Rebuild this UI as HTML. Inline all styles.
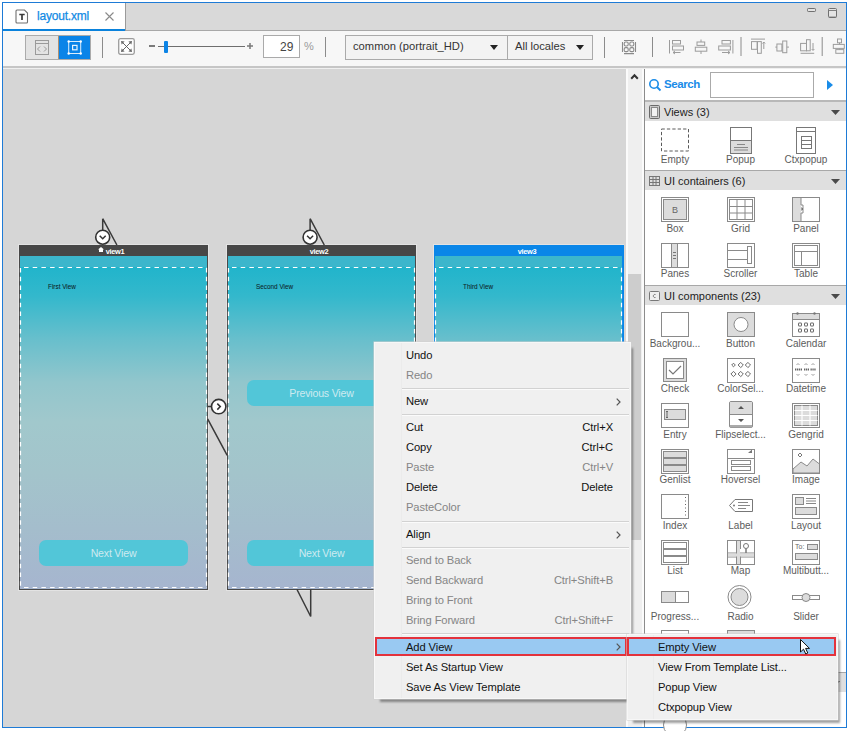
<!DOCTYPE html>
<html><head><meta charset="utf-8"><style>
*{margin:0;padding:0;box-sizing:border-box}
html,body{width:850px;height:731px;overflow:hidden;background:#fff}
body{position:relative;font-family:"Liberation Sans",sans-serif;color:#222}
.a{position:absolute}
.t{position:absolute;white-space:nowrap;line-height:1}
svg{position:absolute;overflow:visible}
.lab{font-size:10px;color:#5c5c5c}
.hdr{font-size:11px;color:#222}
.mi{font-size:11.2px;letter-spacing:-0.1px}
</style></head><body>

<!-- window frame -->
<div class="a" style="left:2px;top:2px;width:845px;height:726px;border:1px solid #1e7bd6;background:#d6d6d6"></div>

<!-- tab strip -->
<div class="a" style="left:3px;top:3px;width:843px;height:28px;background:#d9d9d9;border-bottom:1px solid #a8a8a8"></div>
<div class="a" style="left:3px;top:3px;width:123px;height:28px;background:#fff;border-right:1px solid #9a9a9a"></div>
<div class="a" style="left:3px;top:29px;width:122px;height:2px;background:#0a82dc"></div>
<!-- file icon -->
<svg style="left:15px;top:9px" width="14" height="15" viewBox="0 0 14 15">
  <path d="M2 1 H9.5 L12.5 4 V13 Q12.5 14 11.5 14 H2 Q1 14 1 13 V2 Q1 1 2 1 Z" fill="#fff" stroke="#707070" stroke-width="1.1"/>
  <path d="M4.3 5.5 H9.7 M7 5.5 V11" stroke="#3a3a3a" stroke-width="1.7"/>
</svg>
<div class="t" style="left:37px;top:10px;font-size:12px;color:#118ae4;letter-spacing:-0.2px;-webkit-text-stroke:0.25px #118ae4">layout.xml</div>
<svg style="left:105px;top:12px" width="9" height="9" viewBox="0 0 9 9"><path d="M0.5 0.5 L8.5 8.5 M8.5 0.5 L0.5 8.5" stroke="#8a8a8a" stroke-width="1.1"/></svg>
<!-- min / max -->
<svg style="left:807px;top:8px" width="9" height="4" viewBox="0 0 9 4"><rect x="0.5" y="0.5" width="8" height="3" rx="0.8" fill="#e4e4e4" stroke="#707070"/></svg>
<svg style="left:828px;top:8px" width="9" height="10" viewBox="0 0 9 10"><rect x="0.5" y="0.5" width="8" height="9" rx="1" fill="#e4e4e4" stroke="#707070"/><path d="M0.5 2.5 H8.5" stroke="#808080"/><path d="M1 9 H8" stroke="#707070" stroke-width="0.8"/></svg>

<!-- toolbar -->
<div class="a" style="left:3px;top:31px;width:843px;height:35px;background:#f7f7f7"></div>
<div class="a" style="left:3px;top:66px;width:843px;height:2px;background:#c6c6c6"></div>
<div class="a" style="left:3px;top:68px;width:843px;height:1px;background:#f0f0f0"></div>

<!-- segmented buttons -->
<div class="a" style="left:25px;top:35px;width:66px;height:25px;border:1px solid #ababab;background:#e3e3e3"></div>
<div class="a" style="left:58px;top:36px;width:32px;height:23px;background:#0a84e8;border-left:1px solid #b09070"></div>
<svg style="left:35px;top:40px" width="14" height="15" viewBox="0 0 14 15">
  <rect x="0.5" y="0.5" width="13" height="14" fill="none" stroke="#9a9a9a"/>
  <path d="M0.5 3.5 H13.5" stroke="#9a9a9a"/>
  <path d="M5 6.5 L2.5 9 L5 11.5 M9 6.5 L11.5 9 L9 11.5" fill="none" stroke="#9a9a9a"/>
</svg>
<svg style="left:66px;top:39px" width="17" height="17" viewBox="66 39 17 17">
  <rect x="68.7" y="41.5" width="12" height="12" fill="none" stroke="#fff" stroke-opacity="0.85" stroke-width="1"/>
  <rect x="72.6" y="45.4" width="4.4" height="4.4" fill="none" stroke="#fff" stroke-opacity="0.9" stroke-width="1.2"/>
  <g fill="#fff"><circle cx="68.7" cy="41.5" r="1.2"/><circle cx="80.7" cy="41.5" r="1.2"/><circle cx="68.7" cy="53.5" r="1.2"/><circle cx="80.7" cy="53.5" r="1.2"/></g>
</svg>
<div class="a" style="left:102px;top:37px;width:1px;height:21px;background:#8c8c8c"></div>
<!-- fit icon -->
<svg style="left:118px;top:38px" width="17" height="17" viewBox="0 0 17 17">
  <rect x="0.7" y="0.7" width="15.6" height="15.6" rx="1.8" fill="#fdfdfd" stroke="#9c9c9c" stroke-width="1.3"/>
  <path d="M4.5 4.5 L12.5 12.5 M12.5 4.5 L4.5 12.5" stroke="#555" stroke-width="0.9"/>
  <path d="M3 3 L6.6 3.6 L3.6 6.6 Z M14 3 L10.4 3.6 L13.4 6.6 Z M3 14 L6.6 13.4 L3.6 10.4 Z M14 14 L10.4 13.4 L13.4 10.4 Z" fill="#666"/>
</svg>
<!-- slider -->
<div class="a" style="left:148.5px;top:45px;width:6px;height:1.5px;background:#7a7a7a"></div>
<div class="a" style="left:158px;top:46px;width:87px;height:1.2px;background:#6e6e6e"></div>
<div class="a" style="left:164px;top:41px;width:4px;height:12px;background:#0c84e6;border-radius:1px"></div>
<svg style="left:247px;top:43px" width="6" height="6" viewBox="0 0 6 6"><path d="M0 3 H6 M3 0 V6" stroke="#7a7a7a" stroke-width="1.5"/></svg>
<div class="a" style="left:263px;top:35px;width:37px;height:23px;border:1px solid #aaa;background:#fff"></div>
<div class="t" style="left:280px;top:41px;font-size:12px;color:#444">29</div>
<div class="t" style="left:304px;top:41px;font-size:11px;color:#9a9a9a">%</div>
<div class="a" style="left:325px;top:37px;width:1px;height:20px;background:#8c8c8c"></div>
<!-- combos -->
<div class="a" style="left:345px;top:35px;width:248px;height:25px;border:1px solid #aaa;background:#f3f3f3"></div>
<div class="a" style="left:507px;top:36px;width:1px;height:23px;background:#aaa"></div>
<div class="t" style="left:353px;top:41px;font-size:11.2px;color:#333">common (portrait_HD)</div>
<svg style="left:490px;top:45px" width="8" height="5" viewBox="0 0 8 5"><path d="M0 0 H8 L4 5 Z" fill="#222"/></svg>
<div class="t" style="left:515px;top:41px;font-size:11.2px;color:#333">All locales</div>
<svg style="left:576px;top:45px" width="8" height="5" viewBox="0 0 8 5"><path d="M0 0 H8 L4 5 Z" fill="#222"/></svg>
<div class="a" style="left:604px;top:37px;width:1px;height:21px;background:#8c8c8c"></div>
<!-- grid icon -->
<svg style="left:616px;top:35px" width="26" height="23" viewBox="616 35 26 23">
  <path d="M624 40.5 H634 M624 53.6 H634 M622.5 42 V52 M635.5 42 V52" stroke="#8a8a8a" stroke-width="1.1"/>
  <g fill="none" stroke="#8a8a8a" stroke-width="1.1">
  <rect x="624.2" y="42" width="4" height="4" rx="1.4"/><rect x="629.8" y="42" width="4" height="4" rx="1.4"/>
  <rect x="624.2" y="47.6" width="4" height="4" rx="1.4"/><rect x="629.8" y="47.6" width="4" height="4" rx="1.4"/>
  </g>
</svg>
<div class="a" style="left:652px;top:37px;width:1px;height:20px;background:#8c8c8c"></div>
<svg style="left:664px;top:36px" width="190" height="22" viewBox="664 36 190 22">
 <g fill="none" stroke="#9c9c9c" stroke-width="1">
  <!-- align left -->
  <path d="M669.5 40 V53.5"/>
  <rect x="672.5" y="40.5" width="8" height="3.5"/>
  <rect x="672.5" y="46" width="11" height="4"/>
  <path d="M673 52.5 H680.5 M673 52.5 l2 -1.5 M673 52.5 l2 1.5"/>
  <!-- align center -->
  <path d="M701 39.5 V42 M701 51.2 V54"/>
  <rect x="697" y="42" width="7.7" height="3.4"/>
  <rect x="695.3" y="47.2" width="11.5" height="4"/>
  <!-- align right -->
  <path d="M732.9 40 V53.5"/>
  <rect x="722" y="40.5" width="8.4" height="3.5"/>
  <rect x="718.7" y="46" width="11.7" height="4"/>
  <path d="M722 52.5 H730 M730 52.5 l-2 -1.5 M730 52.5 l-2 1.5"/>
  <!-- align top -->
  <path d="M751 39.1 H765"/>
  <rect x="751.5" y="41.6" width="5.6" height="7.7"/>
  <rect x="757.5" y="41.6" width="3.8" height="11.7"/>
  <path d="M763.8 42 V49 M763.8 42 l-1.3 1.5 M763.8 42 l1.3 1.5"/>
  <!-- align middle -->
  <path d="M775.3 47.1 H789"/>
  <rect x="776.9" y="44" width="5" height="7" fill="#f5f5f5"/>
  <rect x="782.7" y="41" width="4.1" height="11.7" fill="#f5f5f5"/>
  <!-- align bottom -->
  <path d="M800.6 53.3 H814.2"/>
  <rect x="800.6" y="43.4" width="5.9" height="7.4"/>
  <rect x="806.5" y="39.7" width="3.7" height="11.1"/>
  <path d="M813 43 V50 M813 50.5 l-1.3 -1.5 M813 50.5 l1.3 -1.5"/>
  <!-- distribute -->
  <rect x="837.5" y="39" width="4" height="3.8"/>
  <path d="M839.5 42.8 V44.4 M839.5 48.4 V49.6"/>
  <rect x="833.3" y="44.4" width="11" height="4"/>
  <rect x="835.8" y="49.6" width="8" height="3.7"/>
 </g>
 <path d="M741 37 V56 M822.2 37 V56" stroke="#8c8c8c"/>
</svg>

<!-- canvas area is window bg -->

<!-- scrollbar -->
<div class="a" style="left:626px;top:69px;width:18px;height:658px;background:#fbfbfb"></div>
<div class="a" style="left:628px;top:69px;width:14px;height:658px;background:#efefef"></div>
<div class="a" style="left:628px;top:274px;width:13px;height:266px;background:#cdcdcd"></div>
<svg style="left:630px;top:73px" width="9" height="7" viewBox="0 0 9 7"><path d="M1.2 5.8 L4.5 2.2 L7.8 5.8" fill="none" stroke="#333" stroke-width="2"/></svg>

<!-- palette -->
<div class="a" style="left:644px;top:69px;width:202px;height:658px;background:#fff;border-left:1px solid #8c8c8c"></div>
<svg style="left:649px;top:79px" width="13" height="13" viewBox="0 0 13 13"><circle cx="5" cy="5" r="4.2" fill="none" stroke="#1a8ce8" stroke-width="1.6"/><path d="M8 8 L11.5 11.5" stroke="#1a8ce8" stroke-width="1.8"/></svg>
<div class="t" style="left:664px;top:79px;font-size:11.5px;font-weight:bold;color:#1a8ce8;letter-spacing:-0.4px">Search</div>
<div class="a" style="left:710px;top:72px;width:104px;height:26px;border:1px solid #aaa;background:#fff"></div>
<svg style="left:827px;top:80px" width="6" height="10" viewBox="0 0 6 10"><path d="M0 0 L6 5 L0 10 Z" fill="#1a8ce8"/></svg>
<div class="a" style="left:645px;top:100px;width:201px;height:2px;background:#b8b8b8"></div>
<div class="a" style="left:645px;top:102px;width:201px;height:19px;background:#dfdfdf"></div>
<svg style="left:649px;top:105px" width="11" height="14" viewBox="0 0 11 14"><rect x="0.5" y="0.5" width="10" height="13" rx="1" fill="#c8c8c8" stroke="#6a6a6a"/><rect x="2.5" y="2.5" width="6" height="9" fill="#f2f2f2" stroke="#8a8a8a"/></svg>
<div class="t hdr" style="left:664px;top:107px">Views (3)</div>
<svg style="left:830.5px;top:110px" width="9" height="6" viewBox="0 0 9 6"><path d="M0 0 H9 L4.5 5 Z" fill="#4a4a4a"/></svg>
<div class="a" style="left:645px;top:170px;width:201px;height:1px;background:#a8a8a8"></div>
<div class="a" style="left:645px;top:171px;width:201px;height:19px;background:#dfdfdf"></div>
<svg style="left:649px;top:176px" width="11" height="10" viewBox="0 0 11 10"><g fill="none" stroke="#777"><rect x="0.5" y="0.5" width="10" height="9"/><path d="M0.5 3.5 H10.5 M0.5 6.5 H10.5 M4 0.5 V9.5 M7 0.5 V9.5"/></g></svg>
<div class="t hdr" style="left:664px;top:176px">UI containers (6)</div>
<svg style="left:830.5px;top:179px" width="9" height="6" viewBox="0 0 9 6"><path d="M0 0 H9 L4.5 5 Z" fill="#4a4a4a"/></svg>
<div class="a" style="left:645px;top:285px;width:201px;height:1px;background:#a8a8a8"></div>
<div class="a" style="left:645px;top:286px;width:201px;height:19px;background:#dfdfdf"></div>
<svg style="left:649px;top:291px" width="11" height="10" viewBox="0 0 11 10"><rect x="0.5" y="0.5" width="10" height="9" rx="1" fill="#eee" stroke="#777"/><path d="M6.5 3.5 A1.6 1.6 0 1 0 6.5 6.5" fill="none" stroke="#777"/></svg>
<div class="t hdr" style="left:664px;top:291px">UI components (23)</div>
<svg style="left:830.5px;top:294px" width="9" height="6" viewBox="0 0 9 6"><path d="M0 0 H9 L4.5 5 Z" fill="#4a4a4a"/></svg>
<div class="a" style="left:645px;top:672px;width:201px;height:1px;background:#a8a8a8"></div>
<div class="a" style="left:645px;top:673px;width:201px;height:19px;background:#dfdfdf"></div>
<div class="t hdr" style="left:664px;top:678px">UI snippets</div>
<svg style="left:830.5px;top:681px" width="9" height="6" viewBox="0 0 9 6"><path d="M0 0 H9 L4.5 5 Z" fill="#4a4a4a"/></svg>
<svg style="left:661px;top:127px" width="30" height="30" viewBox="0 0 30 30"><rect x="0.5" y="2" width="27" height="22" fill="none" stroke="#5a5a5a" stroke-dasharray="3.3 2.1"/></svg>
<div class="t lab" style="left:635px;top:155px;width:80px;text-align:center">Empty</div>
<svg style="left:726.5px;top:127px" width="30" height="30" viewBox="0 0 30 30"><g transform="translate(3,0)"><rect x="0.5" y="0.5" width="21" height="26" fill="#fff" stroke="#777"/><rect x="1" y="13.5" width="20" height="12.5" fill="#dcdcdc"/><path d="M0.5 13.5 H21.5" stroke="#777"/><path d="M7 17.5 H15 M4 20.5 H18 M4 23 H18" stroke="#888"/></g></svg>
<div class="t lab" style="left:700.5px;top:155px;width:80px;text-align:center">Popup</div>
<svg style="left:792px;top:127px" width="30" height="30" viewBox="0 0 30 30"><g transform="translate(4,0)"><rect x="0.5" y="0.5" width="19" height="26" fill="#fff" stroke="#777"/><path d="M0.5 4.5 H19.5" stroke="#777"/><rect x="5.5" y="9.5" width="10" height="12" fill="#fff" stroke="#777"/><path d="M5.5 13.5 H15.5 M5.5 17.5 H15.5" stroke="#777"/></g></svg>
<div class="t lab" style="left:766px;top:155px;width:80px;text-align:center">Ctxpopup</div>
<svg style="left:661px;top:197px" width="30" height="30" viewBox="0 0 30 30"><rect x="0.5" y="0.5" width="27" height="24" fill="#fff" stroke="#8a8a8a"/><rect x="2.5" y="2.5" width="23" height="20" fill="#dcdcdc" stroke="#8a8a8a"/><text x="14" y="16" font-size="9" text-anchor="middle" fill="#666" font-family="Liberation Sans">B</text></svg>
<div class="t lab" style="left:635px;top:224px;width:80px;text-align:center">Box</div>
<svg style="left:726.5px;top:197px" width="30" height="30" viewBox="0 0 30 30"><rect x="0.5" y="0.5" width="27" height="24" fill="#fff" stroke="#8a8a8a"/><g fill="none" stroke="#8a8a8a"><rect x="2.5" y="2.5" width="23" height="20"/><path d="M2.5 9.5 H25.5 M2.5 16 H25.5 M10 2.5 V22.5 M18 2.5 V22.5"/></g></svg>
<div class="t lab" style="left:700.5px;top:224px;width:80px;text-align:center">Grid</div>
<svg style="left:792px;top:197px" width="30" height="30" viewBox="0 0 30 30"><rect x="0.5" y="0.5" width="27" height="24" fill="#fff" stroke="#8a8a8a"/><rect x="1" y="1" width="8" height="23" fill="#dcdcdc"/><path d="M9 0.5 V8 M9 16 V24.5 M9 8 H11 V16 H9" fill="none" stroke="#8a8a8a"/><path d="M9.5 10 L11 12 L9.5 14 Z" fill="#444"/></svg>
<div class="t lab" style="left:766px;top:224px;width:80px;text-align:center">Panel</div>
<svg style="left:661px;top:243px" width="30" height="30" viewBox="0 0 30 30"><rect x="0.5" y="0.5" width="27" height="24" fill="#fff" stroke="#8a8a8a"/><rect x="10.5" y="0.5" width="6" height="24" fill="#dcdcdc" stroke="#8a8a8a"/><path d="M12 9.5 H15 M12 12.5 H15 M12 15.5 H15" stroke="#777"/></svg>
<div class="t lab" style="left:635px;top:269px;width:80px;text-align:center">Panes</div>
<svg style="left:726.5px;top:243px" width="30" height="30" viewBox="0 0 30 30"><rect x="0.5" y="0.5" width="27" height="24" fill="#fff" stroke="#8a8a8a"/><path d="M0.5 7.5 H20 M0.5 16.5 H20" stroke="#8a8a8a"/><rect x="20.5" y="3.5" width="4" height="17" fill="#fff" stroke="#8a8a8a"/></svg>
<div class="t lab" style="left:700.5px;top:269px;width:80px;text-align:center">Scroller</div>
<svg style="left:792px;top:243px" width="30" height="30" viewBox="0 0 30 30"><rect x="0.5" y="0.5" width="27" height="24" fill="#fff" stroke="#8a8a8a"/><g fill="none" stroke="#8a8a8a"><rect x="2.5" y="2.5" width="23" height="20"/><path d="M2.5 8.5 H25.5 M9.5 8.5 V22.5"/></g></svg>
<div class="t lab" style="left:766px;top:269px;width:80px;text-align:center">Table</div>
<svg style="left:661px;top:312px" width="30" height="30" viewBox="0 0 30 30"><rect x="0.5" y="0.5" width="27" height="24" fill="#fff" stroke="#8a8a8a"/></svg>
<div class="t lab" style="left:635px;top:339px;width:80px;text-align:center">Backgrou...</div>
<svg style="left:726.5px;top:312px" width="30" height="30" viewBox="0 0 30 30"><rect x="0.5" y="0.5" width="27" height="24" fill="#dcdcdc" stroke="#8a8a8a"/><circle cx="14" cy="12.5" r="7" fill="#fff" stroke="#8a8a8a"/></svg>
<div class="t lab" style="left:700.5px;top:339px;width:80px;text-align:center">Button</div>
<svg style="left:792px;top:312px" width="30" height="30" viewBox="0 0 30 30"><rect x="0.5" y="1.5" width="27" height="23" fill="#fff" stroke="#8a8a8a"/><rect x="1" y="2" width="26" height="5.5" fill="#dcdcdc"/><path d="M0.5 7.5 H27.5" stroke="#8a8a8a"/><circle cx="5.5" cy="1.5" r="1.2" fill="#777"/><circle cx="22.5" cy="1.5" r="1.2" fill="#777"/><g fill="none" stroke="#666"><rect x="6.5" y="11" width="3" height="3" rx="0.3"/><rect x="12.5" y="11" width="3" height="3" rx="0.3"/><rect x="18.5" y="11" width="3" height="3" rx="0.3"/><rect x="6.5" y="17" width="3" height="3" rx="0.3"/><rect x="12.5" y="17" width="3" height="3" rx="0.3"/><rect x="18.5" y="17" width="3" height="3" rx="0.3"/></g></svg>
<div class="t lab" style="left:766px;top:339px;width:80px;text-align:center">Calendar</div>
<svg style="left:661px;top:358px" width="30" height="30" viewBox="0 0 30 30"><g transform="translate(2,0)"><rect x="0.5" y="0.5" width="23" height="23" fill="#dcdcdc" stroke="#8a8a8a"/><rect x="3.5" y="3.5" width="17" height="17" fill="#fff" stroke="#8a8a8a"/><path d="M6 12 L10 16 L18 8" fill="none" stroke="#777" stroke-width="1.2"/></g></svg>
<div class="t lab" style="left:635px;top:384px;width:80px;text-align:center">Check</div>
<svg style="left:726.5px;top:358px" width="30" height="30" viewBox="0 0 30 30"><rect x="0.5" y="0.5" width="27" height="24" fill="#fff" stroke="#8a8a8a"/><g fill="none" stroke="#5a5a5a" stroke-width="0.9"><path d="M6.5 5.2 L8.3 7 L6.5 8.8 L4.7 7 Z"/><path d="M13.7 4.4 L16.3 7 L13.7 9.6 L11.1 7 Z"/><path d="M20.9 4.4 L23.5 7 L20.9 9.6 L18.299999999999997 7 Z"/><path d="M6.5 13.4 L9.1 16 L6.5 18.6 L3.9 16 Z"/><path d="M13.7 13.4 L16.3 16 L13.7 18.6 L11.1 16 Z"/><path d="M20.9 13.4 L23.5 16 L20.9 18.6 L18.299999999999997 16 Z"/></g></svg>
<div class="t lab" style="left:700.5px;top:384px;width:80px;text-align:center">ColorSel...</div>
<svg style="left:792px;top:358px" width="30" height="30" viewBox="0 0 30 30"><rect x="0.5" y="0.5" width="27" height="24" fill="#fff" stroke="#8a8a8a"/><g fill="none" stroke="#888" stroke-width="0.8"><path d="M4.5 7 l1.5 -1.5 l1.5 1.5 M12.5 7 l1.5 -1.5 l1.5 1.5 M19.5 7 l1.5 -1.5 l1.5 1.5 M4.5 16 l1.5 1.5 l1.5 -1.5 M12.5 16 l1.5 1.5 l1.5 -1.5 M19.5 16 l1.5 1.5 l1.5 -1.5"/></g><path d="M3 11.5 H10 M12 11.5 H17 M18.5 11.5 H24" stroke="#666" stroke-width="2.2" stroke-dasharray="1.3 0.6"/></svg>
<div class="t lab" style="left:766px;top:384px;width:80px;text-align:center">Datetime</div>
<svg style="left:661px;top:403px" width="30" height="30" viewBox="0 0 30 30"><rect x="0.5" y="0.5" width="27" height="24" fill="#fff" stroke="#8a8a8a"/><rect x="3.5" y="6.5" width="21" height="10" fill="#dcdcdc" stroke="#8a8a8a"/><path d="M6 8.5 V14.5 M5 8.5 H7 M5 14.5 H7" stroke="#666"/></svg>
<div class="t lab" style="left:635px;top:430px;width:80px;text-align:center">Entry</div>
<svg style="left:726.5px;top:401px" width="30" height="30" viewBox="0 0 30 30"><g transform="translate(2,0)"><rect x="0.5" y="0.5" width="23" height="26" rx="1.5" fill="#fff" stroke="#8a8a8a"/><rect x="1" y="1" width="22" height="13" fill="#dcdcdc"/><path d="M0.5 13.5 H23.5" stroke="#8a8a8a"/><rect x="1" y="24" width="22" height="2.5" fill="#aaa"/><path d="M9 8 L12 5 L15 8 Z M9 18 L12 21 L15 18 Z" fill="#555"/></g></svg>
<div class="t lab" style="left:700.5px;top:430px;width:80px;text-align:center">Flipselect...</div>
<svg style="left:792px;top:403px" width="30" height="30" viewBox="0 0 30 30"><rect x="0.5" y="0.5" width="27" height="24" fill="#fff" stroke="#8a8a8a"/><rect x="2.5" y="2.5" width="23" height="20" fill="#dcdcdc" stroke="#8a8a8a"/><path d="M2.5 7.5 H25.5 M2.5 12.5 H25.5 M2.5 17.5 H25.5 M10 2.5 V22.5 M18 2.5 V22.5" stroke="#fff" stroke-width="1.2"/></svg>
<div class="t lab" style="left:766px;top:430px;width:80px;text-align:center">Gengrid</div>
<svg style="left:661px;top:449px" width="30" height="30" viewBox="0 0 30 30"><rect x="0.5" y="0.5" width="27" height="24" fill="#fff" stroke="#8a8a8a"/><g fill="#dcdcdc" stroke="#8a8a8a"><rect x="2.5" y="2.5" width="23" height="6"/><rect x="2.5" y="9.5" width="23" height="6"/><rect x="2.5" y="16.5" width="23" height="6"/></g></svg>
<div class="t lab" style="left:635px;top:475px;width:80px;text-align:center">Genlist</div>
<svg style="left:726.5px;top:449px" width="30" height="30" viewBox="0 0 30 30"><rect x="0.5" y="0.5" width="27" height="24" fill="#fff" stroke="#8a8a8a"/><path d="M21 4 L25 4 L25 0.5 Z" fill="#777"/><path d="M0.5 9.5 H27.5" stroke="#8a8a8a"/><rect x="4.5" y="11.5" width="19" height="4" fill="#fff" stroke="#8a8a8a"/><rect x="4.5" y="17.5" width="19" height="4" fill="#fff" stroke="#8a8a8a"/></svg>
<div class="t lab" style="left:700.5px;top:475px;width:80px;text-align:center">Hoversel</div>
<svg style="left:792px;top:449px" width="30" height="30" viewBox="0 0 30 30"><rect x="0.5" y="0.5" width="27" height="24" fill="#fff" stroke="#8a8a8a"/><path d="M1 20 L9 13 L15 17 L21 10 L27.5 15 V24 H1 Z" fill="#dcdcdc" stroke="#8a8a8a"/><path d="M8 4 L10 6 L8 8 L6 6 Z" fill="none" stroke="#777"/></svg>
<div class="t lab" style="left:766px;top:475px;width:80px;text-align:center">Image</div>
<svg style="left:661px;top:494px" width="30" height="30" viewBox="0 0 30 30"><rect x="0.5" y="0.5" width="27" height="24" fill="#fff" stroke="#8a8a8a"/><path d="M24.5 3 V22" stroke="#666" stroke-dasharray="1 2.5"/></svg>
<div class="t lab" style="left:635px;top:521px;width:80px;text-align:center">Index</div>
<svg style="left:726.5px;top:497px" width="30" height="30" viewBox="0 0 30 30"><path d="M8 2.5 H25.5 V14.5 H8 L2.5 8.5 Z" fill="#fff" stroke="#777"/><circle cx="7" cy="8.5" r="1" fill="#777"/><path d="M11 5.5 H21 M11 8.5 H23 M11 11.5 H19" stroke="#888"/></svg>
<div class="t lab" style="left:700.5px;top:521px;width:80px;text-align:center">Label</div>
<svg style="left:792px;top:494px" width="30" height="30" viewBox="0 0 30 30"><rect x="0.5" y="0.5" width="27" height="24" fill="#fff" stroke="#8a8a8a"/><rect x="3.5" y="3.5" width="8" height="7" fill="#dcdcdc" stroke="#8a8a8a"/><path d="M14 4.5 H24 M14 7 H24 M14 9.5 H24" stroke="#888"/><rect x="3.5" y="13.5" width="21" height="7" fill="#dcdcdc" stroke="#8a8a8a"/></svg>
<div class="t lab" style="left:766px;top:521px;width:80px;text-align:center">Layout</div>
<svg style="left:661px;top:540px" width="30" height="30" viewBox="0 0 30 30"><rect x="0.5" y="0.5" width="27" height="24" fill="#fff" stroke="#8a8a8a"/><g fill="#fff" stroke="#8a8a8a"><rect x="2.5" y="2.5" width="23" height="6"/><rect x="2.5" y="9.5" width="23" height="6"/><rect x="2.5" y="16.5" width="23" height="6"/></g></svg>
<div class="t lab" style="left:635px;top:566px;width:80px;text-align:center">List</div>
<svg style="left:726.5px;top:540px" width="30" height="30" viewBox="0 0 30 30"><rect x="0.5" y="0.5" width="27" height="24" fill="#fff" stroke="#8a8a8a"/><path d="M9.5 0.5 V24.5 M13.5 0.5 V9 M13.5 15 V24.5 M0.5 13 H27.5 M0.5 17 H27.5" stroke="#8a8a8a"/><rect x="10" y="1" width="3" height="23" fill="#dcdcdc"/><rect x="1" y="13.5" width="26" height="3" fill="#dcdcdc"/><circle cx="19" cy="6" r="2.5" fill="#fff" stroke="#777"/><path d="M19 8.5 V13" stroke="#777" stroke-width="1.5"/></svg>
<div class="t lab" style="left:700.5px;top:566px;width:80px;text-align:center">Map</div>
<svg style="left:792px;top:540px" width="30" height="30" viewBox="0 0 30 30"><rect x="0.5" y="0.5" width="27" height="24" fill="#fff" stroke="#8a8a8a"/><text x="3" y="9" font-size="7" fill="#666" font-family="Liberation Sans">To:</text><rect x="15.5" y="4.5" width="10" height="5" fill="#dcdcdc" stroke="#8a8a8a"/><rect x="3.5" y="13.5" width="22" height="6" fill="#dcdcdc" stroke="#8a8a8a"/></svg>
<div class="t lab" style="left:766px;top:566px;width:80px;text-align:center">Multibutt...</div>
<svg style="left:661px;top:591px" width="30" height="30" viewBox="0 0 30 30"><rect x="0.5" y="0.5" width="27" height="11" fill="#fff" stroke="#8a8a8a"/><rect x="1" y="1" width="13" height="10" fill="#dcdcdc"/><path d="M14.5 0.5 V11.5" stroke="#8a8a8a"/></svg>
<div class="t lab" style="left:635px;top:612px;width:80px;text-align:center">Progress...</div>
<svg style="left:726.5px;top:585px" width="30" height="30" viewBox="0 0 30 30"><circle cx="12.5" cy="12" r="11.5" fill="#fff" stroke="#8a8a8a"/><circle cx="12.5" cy="12" r="8.5" fill="#dcdcdc" stroke="#8a8a8a"/></svg>
<div class="t lab" style="left:700.5px;top:612px;width:80px;text-align:center">Radio</div>
<svg style="left:792px;top:593px" width="30" height="30" viewBox="0 0 30 30"><rect x="0.5" y="2.5" width="27" height="4" fill="#fff" stroke="#8a8a8a"/><circle cx="14" cy="4.5" r="4" fill="#dcdcdc" stroke="#8a8a8a"/></svg>
<div class="t lab" style="left:766px;top:612px;width:80px;text-align:center">Slider</div>
<svg style="left:661px;top:630px" width="30" height="30" viewBox="0 0 30 30"><rect x="0.5" y="0.5" width="27" height="24" fill="#fff" stroke="#8a8a8a"/></svg>
<svg style="left:726.5px;top:630px" width="30" height="30" viewBox="0 0 30 30"><rect x="0.5" y="0.5" width="27" height="24" fill="#dcdcdc" stroke="#8a8a8a"/></svg>
<svg style="left:663px;top:713px" width="26" height="20" viewBox="0 0 26 20"><circle cx="12" cy="12" r="11.5" fill="#fff" stroke="#8a8a8a"/></svg>

<div class="a" style="left:19px;top:245px;width:189px;height:345px;background:#4a4a4a;box-shadow:0 0 0 1px #e3e3e3"></div>
<div class="a" style="left:20px;top:256px;width:187px;height:333px;background:linear-gradient(to bottom,#1ab3cb 0%,#33b8cc 12%,#68bfcc 25%,#92c6cc 38%,#a1c8cc 50%,#a3c4cb 65%,#a4bdcc 82%,#a6b5cf 100%)"></div>
<div class="a" style="left:20px;top:256px;width:187px;height:11px;background:#3cb6cc"></div>
<div class="a" style="left:19px;top:245px;width:189px;height:11px;background:#474747"></div>
<svg style="left:19px;top:256px" width="189" height="334" viewBox="0 0 189 334"><g fill="none" stroke="#fff" stroke-width="1.2" stroke-dasharray="4.5 4.2"><path d="M5 11.5 H188"/><path d="M1.5 12 V331"/><path d="M187.5 12 V331"/><path d="M5 331.5 H188"/></g></svg>
<svg style="left:98px;top:246.5px" width="6" height="5" viewBox="0 0 6 5"><path d="M0 2.6 L3 0 L6 2.6 H5 V5 H1 V2.6 Z" fill="#fff"/></svg>
<div class="t" style="left:85px;top:248px;width:60px;text-align:center;font-size:7.4px;font-weight:bold;color:#fff;letter-spacing:-0.3px">view1</div>
<div class="t" style="left:48px;top:284px;font-size:6.4px;color:#0c2328;-webkit-text-stroke:0.05px #0c2328">First View</div>
<div class="a" style="left:227px;top:245px;width:189px;height:345px;background:#4a4a4a;box-shadow:0 0 0 1px #e3e3e3"></div>
<div class="a" style="left:228px;top:256px;width:187px;height:333px;background:linear-gradient(to bottom,#1ab3cb 0%,#33b8cc 12%,#68bfcc 25%,#92c6cc 38%,#a1c8cc 50%,#a3c4cb 65%,#a4bdcc 82%,#a6b5cf 100%)"></div>
<div class="a" style="left:228px;top:256px;width:187px;height:11px;background:#3cb6cc"></div>
<div class="a" style="left:227px;top:245px;width:189px;height:11px;background:#474747"></div>
<svg style="left:227px;top:256px" width="189" height="334" viewBox="0 0 189 334"><g fill="none" stroke="#fff" stroke-width="1.2" stroke-dasharray="4.5 4.2"><path d="M5 11.5 H188"/><path d="M1.5 12 V331"/><path d="M187.5 12 V331"/><path d="M5 331.5 H188"/></g></svg>
<div class="t" style="left:289px;top:248px;width:60px;text-align:center;font-size:7.4px;font-weight:bold;color:#fff;letter-spacing:-0.3px">view2</div>
<div class="t" style="left:256px;top:284px;font-size:6.4px;color:#0c2328;-webkit-text-stroke:0.05px #0c2328">Second View</div>
<div class="a" style="left:434px;top:245px;width:189px;height:345px;background:#0a86e8;box-shadow:0 0 0 1px #e3e3e3"></div>
<div class="a" style="left:435px;top:256px;width:187px;height:333px;background:linear-gradient(to bottom,#1ab3cb 0%,#33b8cc 12%,#68bfcc 25%,#92c6cc 38%,#a1c8cc 50%,#a3c4cb 65%,#a4bdcc 82%,#a6b5cf 100%)"></div>
<div class="a" style="left:435px;top:256px;width:187px;height:11px;background:#3cb6cc"></div>
<div class="a" style="left:434px;top:245px;width:189px;height:11px;background:#0a86e8"></div>
<svg style="left:434px;top:256px" width="189" height="334" viewBox="0 0 189 334"><g fill="none" stroke="#fff" stroke-width="1.2" stroke-dasharray="4.5 4.2"><path d="M5 11.5 H188"/><path d="M1.5 12 V331"/><path d="M187.5 12 V331"/><path d="M5 331.5 H188"/></g></svg>
<div class="t" style="left:497px;top:248px;width:60px;text-align:center;font-size:7.4px;font-weight:bold;color:#fff;letter-spacing:-0.3px">view3</div>
<div class="t" style="left:463px;top:284px;font-size:6.4px;color:#0c2328;-webkit-text-stroke:0.05px #0c2328">Third View</div>
<div class="a" style="left:623px;top:245px;width:1px;height:345px;background:#0a86e8"></div>
<div class="a" style="left:39px;top:540px;width:149px;height:26px;border-radius:7px;background:#52c6d8"></div>
<div class="t" style="left:39px;top:548px;width:149px;text-align:center;font-size:10.6px;color:#cdeaf0;letter-spacing:-0.2px">Next View</div>
<div class="a" style="left:247px;top:540px;width:149px;height:26px;border-radius:7px;background:#52c6d8"></div>
<div class="t" style="left:247px;top:548px;width:149px;text-align:center;font-size:10.6px;color:#cdeaf0;letter-spacing:-0.2px">Next View</div>
<div class="a" style="left:247px;top:380px;width:149px;height:26px;border-radius:7px;background:#52c6d8"></div>
<div class="t" style="left:247px;top:388px;width:149px;text-align:center;font-size:10.6px;color:#cdeaf0;letter-spacing:-0.2px">Previous View</div>
<svg style="left:0;top:0" width="850" height="731" viewBox="0 0 850 731">
 <g fill="none" stroke="#3a3a3a" stroke-width="1.5">
  <path d="M102.7 218.7 V230 M102.7 218.7 L116.9 245"/>
  <path d="M310.1 218.7 V230 M310.1 218.7 L324.3 245"/>
  <path d="M207.6 406.6 H211.2 M207.6 418.8 L227.2 455.3"/>
  <path d="M297 589.5 L310.7 616.5 V589.5"/>
 </g>
 <g stroke="#333" stroke-width="1.6" fill="#fff">
  <circle cx="102.7" cy="237.2" r="7"/>
  <circle cx="310.1" cy="237.2" r="7"/>
  <circle cx="218.7" cy="406.6" r="7.2"/>
 </g>
 <g fill="none" stroke="#333" stroke-width="1.5">
  <path d="M99.7 235.8 L102.7 238.8 L105.7 235.8"/>
  <path d="M307.1 235.8 L310.1 238.8 L313.1 235.8"/>
  <path d="M217.3 403.6 L220.3 406.6 L217.3 409.6"/>
 </g>
</svg>

<div class="a" style="left:380px;top:348px;width:253px;height:354px;background:rgba(0,0,0,0.38);filter:blur(1px)"></div>
<div class="a" style="left:374px;top:342px;width:257px;height:357px;background:#f0f0f0;border:1px solid #f7f7f7;box-shadow:0 0 0 0.5px #d0d0d0"></div>
<div class="a" style="left:401px;top:343px;width:1px;height:355px;background:#ebebeb"></div>
<div class="a" style="left:375px;top:637px;width:252px;height:19px;background:#99c9f2;border:2px solid #e3323c"></div>
<div class="t mi" style="left:406px;top:350px;color:#121212">Undo</div>
<div class="t mi" style="left:406px;top:370px;color:#858585">Redo</div>
<div class="a" style="left:402px;top:388px;width:227px;height:1px;background:#d2d2d2"></div>
<div class="a" style="left:402px;top:389px;width:227px;height:1px;background:#fbfbfb"></div>
<div class="t mi" style="left:406px;top:396px;color:#121212">New</div>
<svg style="left:616px;top:397.5px" width="5" height="8" viewBox="0 0 5 8"><path d="M0.7 0.7 L4 4 L0.7 7.3" fill="none" stroke="#555" stroke-width="1.2"/></svg>
<div class="a" style="left:402px;top:414px;width:227px;height:1px;background:#d2d2d2"></div>
<div class="a" style="left:402px;top:415px;width:227px;height:1px;background:#fbfbfb"></div>
<div class="t mi" style="left:406px;top:422px;color:#121212">Cut</div>
<div class="t mi" style="left:512px;width:101px;text-align:right;top:422px;color:#121212">Ctrl+X</div>
<div class="t mi" style="left:406px;top:442px;color:#121212">Copy</div>
<div class="t mi" style="left:512px;width:101px;text-align:right;top:442px;color:#121212">Ctrl+C</div>
<div class="t mi" style="left:406px;top:462px;color:#858585">Paste</div>
<div class="t mi" style="left:512px;width:101px;text-align:right;top:462px;color:#858585">Ctrl+V</div>
<div class="t mi" style="left:406px;top:482px;color:#121212">Delete</div>
<div class="t mi" style="left:512px;width:101px;text-align:right;top:482px;color:#121212">Delete</div>
<div class="t mi" style="left:406px;top:502px;color:#858585">PasteColor</div>
<div class="a" style="left:402px;top:521px;width:227px;height:1px;background:#d2d2d2"></div>
<div class="a" style="left:402px;top:522px;width:227px;height:1px;background:#fbfbfb"></div>
<div class="t mi" style="left:406px;top:529px;color:#121212">Align</div>
<svg style="left:616px;top:530.5px" width="5" height="8" viewBox="0 0 5 8"><path d="M0.7 0.7 L4 4 L0.7 7.3" fill="none" stroke="#555" stroke-width="1.2"/></svg>
<div class="a" style="left:402px;top:547px;width:227px;height:1px;background:#d2d2d2"></div>
<div class="a" style="left:402px;top:548px;width:227px;height:1px;background:#fbfbfb"></div>
<div class="t mi" style="left:406px;top:555px;color:#858585">Send to Back</div>
<div class="t mi" style="left:406px;top:575px;color:#858585">Send Backward</div>
<div class="t mi" style="left:512px;width:101px;text-align:right;top:575px;color:#858585">Ctrl+Shift+B</div>
<div class="t mi" style="left:406px;top:595px;color:#858585">Bring to Front</div>
<div class="t mi" style="left:406px;top:615px;color:#858585">Bring Forward</div>
<div class="t mi" style="left:512px;width:101px;text-align:right;top:615px;color:#858585">Ctrl+Shift+F</div>
<div class="a" style="left:402px;top:633px;width:227px;height:1px;background:#d2d2d2"></div>
<div class="a" style="left:402px;top:634px;width:227px;height:1px;background:#fbfbfb"></div>
<div class="t mi" style="left:406px;top:641.5px;color:#121212">Add View</div>
<svg style="left:616px;top:643.0px" width="5" height="8" viewBox="0 0 5 8"><path d="M0.7 0.7 L4 4 L0.7 7.3" fill="none" stroke="#555" stroke-width="1.2"/></svg>
<div class="t mi" style="left:406px;top:661.5px;color:#121212">Set As Startup View</div>
<div class="t mi" style="left:406px;top:681.5px;color:#121212">Save As View Template</div>
<div class="a" style="left:633px;top:640px;width:207px;height:83px;background:rgba(0,0,0,0.38);filter:blur(1px)"></div>
<div class="a" style="left:627px;top:634px;width:211px;height:86px;background:#f0f0f0;border:1px solid #f7f7f7;box-shadow:0 0 0 0.5px #d0d0d0"></div>
<div class="a" style="left:653px;top:635px;width:1px;height:84px;background:#ebebeb"></div>
<div class="a" style="left:627px;top:637px;width:209px;height:19px;background:#99c9f2;border:2px solid #e3323c"></div>
<div class="t mi" style="left:658px;top:641.5px;color:#121212">Empty View</div>
<div class="t mi" style="left:658px;top:661.5px;color:#121212">View From Template List...</div>
<div class="t mi" style="left:658px;top:681.5px;color:#121212">Popup View</div>
<div class="t mi" style="left:658px;top:701.5px;color:#121212">Ctxpopup View</div>
<svg style="left:800px;top:639px" width="12" height="16" viewBox="0 0 12 16"><path d="M0.5 0.5 V13 L3.5 10.2 L5.8 15 L7.8 14 L5.6 9.4 H9.5 Z" fill="#fff" stroke="#111" stroke-width="1" stroke-linejoin="round"/></svg>


</body></html>
